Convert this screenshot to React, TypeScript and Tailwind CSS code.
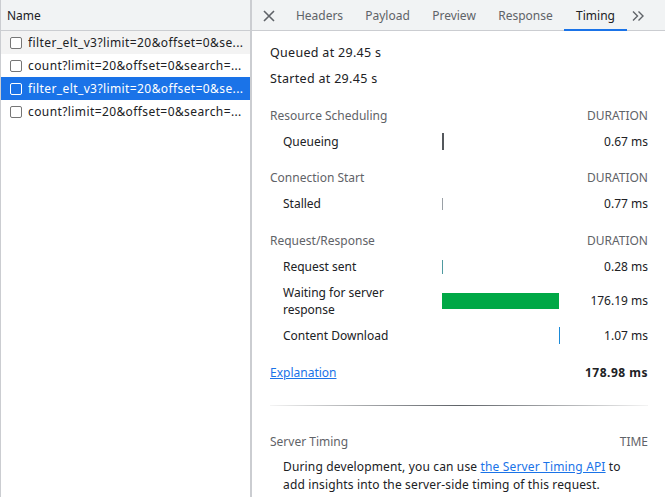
import React from "react";

const rows = [
  { text: "filter_elt_v3?limit=20&offset=0&se...", state: "hover" },
  { text: "count?limit=20&offset=0&search=...", state: "" },
  { text: "filter_elt_v3?limit=20&offset=0&se...", state: "selected" },
  { text: "count?limit=20&offset=0&search=...", state: "" },
];

function Checkbox({ light }: { light?: boolean }) {
  return (
    <div
      className={
        light
          ? "w-[12px] h-[12px] rounded-[2px] border border-white shrink-0"
          : "w-[12px] h-[12px] rounded-[2px] border border-[#767676] shrink-0 bg-white"
      }
    />
  );
}

function SectionHeader({ title, right }: { title: string; right: string }) {
  return (
    <div className="flex h-[26px] items-center justify-between text-[#5f6368]">
      <span>{title}</span>
      <span>{right}</span>
    </div>
  );
}

function TimingRow({
  label,
  value,
  bar,
  tall,
}: {
  label: React.ReactNode;
  value: string;
  bar: React.ReactNode;
  tall?: boolean;
}) {
  return (
    <div
      className={
        tall
          ? "grid grid-cols-[172px_118px_1fr] items-center h-[44px]"
          : "grid grid-cols-[172px_118px_1fr] items-center h-[25px]"
      }
    >
      <div className="pl-[13px] leading-[17px] text-[#202124]">{label}</div>
      <div className="relative h-[18px] flex items-center">{bar}</div>
      <div className="text-right text-[#202124]">{value}</div>
    </div>
  );
}

export default function App() {
  return (
    <div className="flex h-[497px] w-[665px] overflow-hidden bg-white text-[12px] text-[#202124] font-['Noto_Sans','Open_Sans',sans-serif]">
      {/* Left panel */}
      <div className="flex w-[250px] shrink-0 flex-col border-l border-[#cbcdd1]">
        <div className="flex h-[31px] items-center border-b border-[#cbcdd1] bg-[#f1f3f4] pl-[6px] pt-[1px] text-[#202124]">
          Name
        </div>
        {rows.map((r, i) => (
          <div
            key={i}
            className={
              r.state === "selected"
                ? "flex h-[23px] items-center gap-[6px] bg-[#1a73e8] pl-[9px] text-white whitespace-nowrap tracking-[0.4px]"
                : r.state === "hover"
                ? "flex h-[23px] items-center gap-[6px] bg-[#f3f3f3] pl-[9px] text-[#202124] whitespace-nowrap tracking-[0.4px]"
                : "flex h-[23px] items-center gap-[6px] bg-white pl-[9px] text-[#202124] whitespace-nowrap tracking-[0.4px]"
            }
          >
            <Checkbox light={r.state === "selected"} />
            <span className="overflow-hidden">{r.text}</span>
          </div>
        ))}
      </div>
      {/* Divider */}
      <div className="w-[2px] shrink-0 bg-[#cbcdd1]" />
      {/* Right panel */}
      <div className="flex min-w-0 flex-1 flex-col">
        <div className="flex h-[31px] items-stretch border-b border-[#cbcdd1] bg-[#f1f3f4] pt-[1px] text-[#5f6368]">
          <div className="flex w-[33px] items-center justify-center">
            <svg width="14" height="14" viewBox="0 0 14 14" fill="none">
              <path d="M2 2L12 12M12 2L2 12" stroke="#5f6368" strokeWidth="1.6" />
            </svg>
          </div>
          <div className="flex w-[69px] items-center justify-center">Headers</div>
          <div className="flex w-[67px] items-center justify-center">Payload</div>
          <div className="flex w-[66px] items-center justify-center">Preview</div>
          <div className="flex w-[77px] items-center justify-center">Response</div>
          <div className="relative flex w-[63px] items-center justify-center text-[#202124]">
            Timing
            <div className="absolute bottom-[-1px] left-0 right-0 h-[2px] bg-[#1a73e8]" />
          </div>
          <div className="flex w-[22px] items-center justify-center">
            <svg width="14" height="12" viewBox="0 0 14 12" fill="none">
              <path d="M2 1.5L6.5 6L2 10.5M7.5 1.5L12 6L7.5 10.5" stroke="#5f6368" strokeWidth="1.4" />
            </svg>
          </div>
        </div>
        <div className="flex flex-col pl-[18px] pr-[17px] pt-[9px]">
          <div className="flex h-[26px] items-center text-[12.5px] tracking-[0.3px]">Queued at 29.45 s</div>
          <div className="flex h-[26px] items-center text-[12.5px] tracking-[0.3px]">Started at 29.45 s</div>

          <div className="mt-[11px]">
            <SectionHeader title="Resource Scheduling" right="DURATION" />
            <TimingRow
              label="Queueing"
              value="0.67 ms"
              bar={<div className="h-[17px] w-[2px] bg-[#54585c]" />}
            />
          </div>

          <div className="mt-[11px]">
            <SectionHeader title="Connection Start" right="DURATION" />
            <TimingRow
              label="Stalled"
              value="0.77 ms"
              bar={<div className="h-[12px] w-[1px] bg-[#9aa0a6]" />}
            />
          </div>

          <div className="mt-[12px]">
            <SectionHeader title="Request/Response" right="DURATION" />
            <TimingRow
              label="Request sent"
              value="0.28 ms"
              bar={<div className="h-[14px] w-[1px] bg-[#4e9aa0]" />}
            />
            <TimingRow
              tall
              label={
                <>
                  Waiting for server
                  <br />
                  response
                </>
              }
              value="176.19 ms"
              bar={<div className="h-[16px] w-[117px] bg-[#00a846]" />}
            />
            <TimingRow
              label="Content Download"
              value="1.07 ms"
              bar={
                <div className="flex h-full w-full items-center">
                  <div className="ml-[117px] h-[17px] w-[1px] bg-[#1a8ad8]" />
                </div>
              }
            />
          </div>

          <div className="mt-[12px] flex h-[25px] items-center justify-between">
            <span className="text-[#1a73e8] underline">Explanation</span>
            <span className="font-bold tracking-[0.5px] text-[#202124]">178.98 ms</span>
          </div>

          <div className="mt-[20px] h-[1px] bg-gradient-to-r from-[#f4f4f4] via-[#5f6368] to-[#f4f4f4]" />

          <div className="mt-[23px]">
            <SectionHeader title="Server Timing" right="TIME" />
            <div className="mt-[3px] pl-[13px] leading-[18px] whitespace-nowrap tracking-[0.15px]">
              During development, you can use{" "}
              <span className="text-[#1a73e8] underline">the Server Timing API</span> to
              <br />
              add insights into the server-side timing of this request.
            </div>
          </div>
        </div>
      </div>
    </div>
  );
}
